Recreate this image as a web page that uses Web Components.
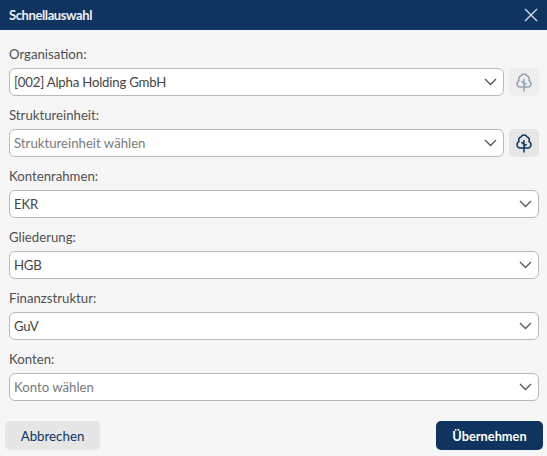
<!DOCTYPE html>
<html lang="de">
<head>
<meta charset="utf-8">
<title>Schnellauswahl</title>
<style>
  html, body { margin: 0; height: 100%; background: #f6f6f6; }
  body { font-family: Lato, "Liberation Sans", sans-serif; overflow: hidden; }
</style>
</head>
<body>
<quick-dialog heading="Schnellauswahl">
  <select-field label="Organisation:" value="[002] Alpha Holding GmbH"><tree-button disabled></tree-button></select-field>
  <select-field label="Struktureinheit:" placeholder="Struktureinheit wählen"><tree-button></tree-button></select-field>
  <select-field label="Kontenrahmen:" value="EKR"></select-field>
  <select-field label="Gliederung:" value="HGB"></select-field>
  <select-field label="Finanzstruktur:" value="GuV"></select-field>
  <select-field label="Konten:" placeholder="Konto wählen"></select-field>
  <action-button slot="footer">Abbrechen</action-button>
  <action-button slot="footer" primary>Übernehmen</action-button>
</quick-dialog>

<script>
class QuickDialog extends HTMLElement {
  constructor() {
    super();
    this.shadowDOM = this.attachShadow({mode: 'open'});
  }

  connectedCallback() {
    this.shadowDOM.innerHTML = `
    <style>
      :host { display: flex; flex-direction: column; height: 456px; background: #f6f6f6; }
      header {
        height: 30px;
        flex: none;
        display: flex;
        align-items: center;
        justify-content: space-between;
        padding: 0 9px;
        background: #0f3460;
        color: #eef1f5;
      }
      h1 { margin: 0; font-size: 13px; font-weight: 700; letter-spacing: -0.4px; }
      svg { display: block; }
      main { display: flex; flex-direction: column; padding: 5px 8px 0 9px; }
      footer { display: flex; justify-content: space-between; padding: 20px 4px 0 5px; }
    </style>
    <header>
      <h1>${this.getAttribute('heading')}</h1>
      <svg width="14" height="14" viewBox="0 0 14 14" fill="none" stroke="#d5dce6" stroke-width="1.4">
        <path d="M1 1l12 12M13 1L1 13"/>
      </svg>
    </header>
    <main><slot></slot></main>
    <footer><slot name="footer"></slot></footer>
    `;
  }
}

class SelectField extends HTMLElement {
  constructor() {
    super();
    this.shadowDOM = this.attachShadow({mode: 'open'});
  }

  connectedCallback() {
    const value = this.getAttribute('value');
    const text = value || this.getAttribute('placeholder');
    this.shadowDOM.innerHTML = `
    <style>
      :host { display: block; }
      label {
        display: block;
        height: 33px;
        line-height: 16px;
        padding-top: 11px;
        box-sizing: border-box;
        font-size: 13.2px;
        color: #505050;
      }
      .row { display: flex; gap: 5px; }
      .box {
        flex: 1;
        height: 28px;
        box-sizing: border-box;
        display: flex;
        align-items: center;
        justify-content: space-between;
        padding: 0 6px 0 4px;
        background: #fff;
        border: 1px solid #b9b9b9;
        border-radius: 6px;
        font-size: 13.2px;
        color: #454545;
      }
      .value { letter-spacing: -0.2px; }
      .placeholder { color: #7a7a7a; }
      svg { display: block; flex: none; }
      ::slotted(*) { flex: none; }
    </style>
    <label>${this.getAttribute('label')}</label>
    <div class="row">
      <div class="box">
        <span class="${value ? 'value' : 'placeholder'}">${text}</span>
        <svg width="13" height="8" viewBox="0 0 13 8" fill="none" stroke="#555" stroke-width="1.3">
          <path d="M1 1l5.5 5.5L12 1"/>
        </svg>
      </div>
      <slot></slot>
    </div>
    `;
  }
}

class TreeButton extends HTMLElement {
  constructor() {
    super();
    this.shadowDOM = this.attachShadow({mode: 'open'});
  }

  connectedCallback() {
    const disabled = this.hasAttribute('disabled');
    this.shadowDOM.innerHTML = `
    <style>
      :host {
        display: flex;
        align-items: center;
        justify-content: center;
        width: 30px;
        height: 28px;
        border-radius: 5px;
        background: ${disabled ? '#eeeeee' : '#e6e6e6'};
      }
      svg { display: block; opacity: ${disabled ? 0.4 : 1}; }
    </style>
    <svg width="16" height="19" viewBox="0 0 16 19" fill="none" stroke="#0f3460" stroke-width="1.5" stroke-linejoin="round" stroke-linecap="round">
      <path d="M8 14H4.500C2.400 14 1 12.500 1 10.600c0-1.400.8-2.600 2-3.100C2.700 6.900 2.700 6.400 2.700 6 2.700 4.400 3.700 3.300 5 3 5.500 1.800 6.600 1 8 1s2.600.8 3.100 2c1.300.3 2.200 1.400 2.200 3 0 .4 0 .9-.3 1.500 1.200.5 2 1.700 2 3.100 0 1.900-1.400 3.400-3.500 3.400H8z"/>
      <path d="M8 6.500V18M8 10.500L5.800 8.500M8 12.500l2.200-2"/>
    </svg>
    `;
  }
}

class ActionButton extends HTMLElement {
  constructor() {
    super();
    this.shadowDOM = this.attachShadow({mode: 'open'});
  }

  connectedCallback() {
    const primary = this.hasAttribute('primary');
    this.shadowDOM.innerHTML = `
    <style>
      :host {
        display: flex;
        align-items: center;
        justify-content: center;
        height: 29px;
        width: ${primary ? '107px' : '95px'};
        border-radius: 5px;
        font-size: ${primary ? '12.8px' : '13.3px'};
        font-weight: ${primary ? 700 : 400};
        background: ${primary ? '#0f3460' : '#e6e6e6'};
        color: ${primary ? '#fff' : '#0f3460'};
      }
    </style>
    <slot></slot>
    `;
  }
}

customElements.define('quick-dialog', QuickDialog);
customElements.define('select-field', SelectField);
customElements.define('tree-button', TreeButton);
customElements.define('action-button', ActionButton);
</script>
</body>
</html>
